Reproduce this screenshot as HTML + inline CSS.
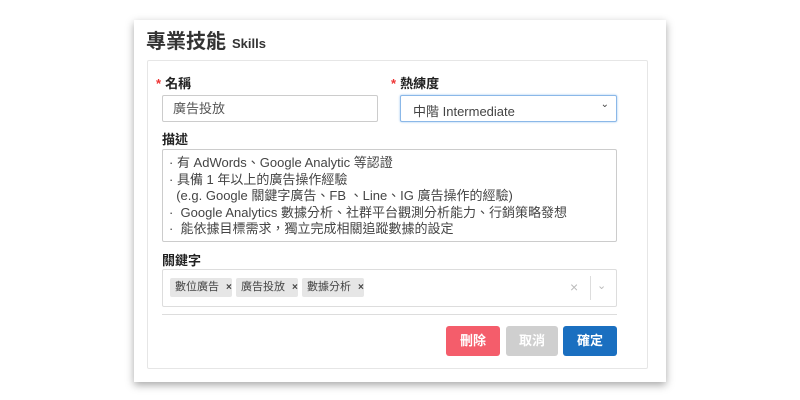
<!DOCTYPE html>
<html><head><meta charset="utf-8"><style>
*{box-sizing:border-box;margin:0;padding:0}
body{width:800px;height:400px;background:#fff;font-family:"Liberation Sans","Noto Sans CJK TC",sans-serif;position:relative;overflow:hidden;color:#222}
.card{position:absolute;left:134px;top:20px;width:532px;height:362px;background:#fff;box-shadow:0 3px 8px rgba(0,0,0,.35)}
.abs{position:absolute}
.title{left:146px;top:25px;font-size:20px;font-weight:bold;color:#333}
.title small{font-size:13px;margin-left:6px}
.panel{left:147px;top:60px;width:501px;height:309px;border:1px solid #e6e6e6;border-radius:2px}
.lbl{font-size:13px;font-weight:bold;color:#222}
.lbl .r{color:#e33;margin-right:4px}
.in{border:1px solid #ccc;border-radius:2px;background:#fff;font-size:13px;color:#444}
.tag{position:absolute;top:278px;height:19px;background:#e6e6e6;border-radius:2px;font-size:11px;line-height:19px;padding-left:5px;color:#444;white-space:nowrap}
.tag b{font-size:10px;margin-left:7px}
.btn{position:absolute;top:326px;height:30px;border-radius:3px;color:#fff;font-size:13px;text-align:center;line-height:30px;font-weight:bold}
</style></head><body>
<div class="card"></div>
<div class="abs title">專業技能<small>Skills</small></div>
<div class="abs panel"></div>
<div class="abs lbl" style="left:156px;top:73px"><span class="r">*</span>名稱</div>
<div class="abs lbl" style="left:391px;top:73px"><span class="r">*</span>熱練度</div>
<div class="abs in" style="left:162px;top:95px;width:216px;height:27px;padding:4px 10px;color:#555;line-height:17px">廣告投放</div>
<div class="abs in" style="left:400px;top:95px;width:217px;height:27px;padding:5px 12px;border-color:#8bb8e8;box-shadow:0 0 2px #9cc4ee">中階 Intermediate<span style="position:absolute;right:7px;top:3px;font-size:10px">⌄</span></div>
<div class="abs lbl" style="left:162px;top:129px">描述</div>
<div class="abs in" style="left:162px;top:149px;width:455px;height:93px;padding:5px 6px;line-height:16.6px;font-size:13px;color:#444">
· 有 AdWords、Google Analytic 等認證<br>· 具備 1 年以上的廣告操作經驗<br>&nbsp;&nbsp;(e.g. Google 關鍵字廣告、FB 、Line、IG 廣告操作的經驗)<br>·&nbsp; Google Analytics 數據分析、社群平台觀測分析能力、行銷策略發想<br>·&nbsp; 能依據目標需求，獨立完成相關追蹤數據的設定</div>
<div class="abs lbl" style="left:162px;top:250px">關鍵字</div>
<div class="abs in" style="left:162px;top:269px;width:455px;height:38px;border-color:#ddd"></div>
<div class="tag" style="left:170px;width:62px">數位廣告<b>×</b></div>
<div class="tag" style="left:236px;width:62px">廣告投放<b>×</b></div>
<div class="tag" style="left:302px;width:62px">數據分析<b>×</b></div>
<div class="abs" style="left:570px;top:279px;color:#bbb;font-size:14px">×</div>
<div class="abs" style="left:590px;top:276px;width:1px;height:24px;background:#ddd"></div>
<div class="abs" style="left:597px;top:279px;color:#bbb;font-size:11px">⌄</div>
<div class="abs" style="left:162px;top:314px;width:455px;height:1px;background:#ddd"></div>
<div class="btn" style="left:446px;width:54px;background:#f45d6b">刪除</div>
<div class="btn" style="left:506px;width:52px;background:#cfcfcf">取消</div>
<div class="btn" style="left:563px;width:54px;background:#1a6fc0">確定</div>
</body></html>
